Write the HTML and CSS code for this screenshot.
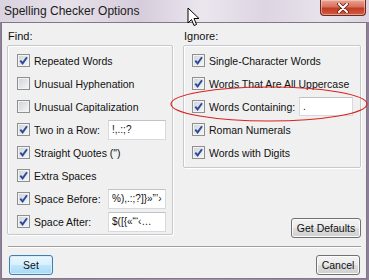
FILE: index.html
```html
<!DOCTYPE html>
<html lang="en">
<head>
    <meta charset="UTF-8">
    <meta name="viewport" content="width=device-width, initial-scale=1.0">
    <title>Spelling Checker Options</title>
    <link rel="stylesheet" href="styles.css">
</head>
<body>
    <div class="window">
        <div class="titlebar">
            <span class="title">Spelling Checker Options</span>
            <div class="close">
                <svg width="16" height="10" viewBox="0 0 16 10">
                    <path d="M4 1 L12 9 M12 1 L4 9" stroke="#5a1d14" stroke-width="3.6" stroke-linecap="round"/>
                    <path d="M4 1 L12 9 M12 1 L4 9" stroke="#fff" stroke-width="2" stroke-linecap="round"/>
                </svg>
            </div>
        </div>

        <div class="client">
            <div class="columns">
                <!-- find -->
                <div class="col col-find">
                    <div class="caption">Find:</div>
                    <div class="group">
                        <div class="row"><span class="cb on"></span><span>Repeated Words</span></div>
                        <div class="row"><span class="cb"></span><span>Unusual Hyphenation</span></div>
                        <div class="row"><span class="cb"></span><span>Unusual Capitalization</span></div>
                        <div class="row"><span class="cb on"></span><span>Two in a Row:</span><input class="field" type="text" value="!,.:;?"></div>
                        <div class="row"><span class="cb on"></span><span>Straight Quotes (")</span></div>
                        <div class="row"><span class="cb on"></span><span>Extra Spaces</span></div>
                        <div class="row"><span class="cb on"></span><span>Space Before:</span><input class="field" type="text" value="%),.:;?]}»”’›"></div>
                        <div class="row"><span class="cb on"></span><span>Space After:</span><input class="field" type="text" value="$([{«“‘‹…"></div>
                    </div>
                </div>

                <!-- ignore -->
                <div class="col col-ignore">
                    <div class="caption">Ignore:</div>
                    <div class="group">
                        <div class="row"><span class="cb on"></span><span>Single-Character Words</span></div>
                        <div class="row"><span class="cb on"></span><span>Words That Are All Uppercase</span></div>
                        <div class="row"><span class="cb on"></span><span>Words Containing:</span><input class="field small" type="text" value="."></div>
                        <div class="row"><span class="cb on"></span><span>Roman Numerals</span></div>
                        <div class="row"><span class="cb on"></span><span>Words with Digits</span></div>
                    </div>
                    <div class="defaults"><button class="btn wide">Get Defaults</button></div>
                </div>
            </div>

            <div class="sep"></div>

            <div class="footer">
                <button class="btn default">Set</button>
                <button class="btn">Cancel</button>
            </div>
        </div>

        <!-- annotation over the dialog -->
        <svg class="ring" width="369" height="280" viewBox="0 0 369 280">
            <ellipse cx="269" cy="104" rx="98" ry="17" fill="none" stroke="#d8231f" stroke-width="1.2"/>
        </svg>
        <svg class="cursor" width="14" height="20" viewBox="0 0 14 20">
            <path d="M1 1 L1 16 L4.5 12.5 L7 18.5 L9.5 17.5 L7 11.5 L12 11.5 Z" fill="#fff" stroke="#000" stroke-width="1" stroke-linejoin="round"/>
        </svg>
    </div>
</body>
</html>
```

FILE: styles.css
```css
* { margin: 0; padding: 0; box-sizing: border-box; }
body {
    width: 369px;
    height: 280px;
    overflow: hidden;
    font-family: "Liberation Sans", Arial, sans-serif;
    font-size: 10.5px;
    color: #111;
}
.window {
    position: relative;
    width: 369px;
    height: 280px;
    background: linear-gradient(90deg, #8f7f98, #a695ad 50%, #8e7f97);
}

/* glass title bar */
.titlebar {
    height: 22px;
    display: flex;
    align-items: flex-start;
    justify-content: space-between;
    background: linear-gradient(90deg, #dad3e0 0%, #e7e1ea 18%, #d6cddc 38%, #ebe6ee 55%, #ddd5e2 72%, #e8e3eb 88%, #dbd4e0 100%);
}
.title {
    padding: 4px 0 0 4px;
    font-size: 12px;
    color: #1b1b1b;
}
.close {
    width: 46px;
    height: 16px;
    margin-right: 3px;
    display: flex;
    align-items: center;
    justify-content: center;
    border: 1px solid #6b2a22;
    border-top: none;
    border-radius: 0 0 4px 4px;
    background: linear-gradient(#e9a595 0%, #d8705c 45%, #c23b25 55%, #d25c40 100%);
    box-shadow: inset 0 0 0 1px rgba(255, 220, 210, 0.5);
}

/* client area */
.client {
    width: 366px;
    height: 257px;
    margin-left: 1px;
    background: #f0f0f0;
    border: 1px solid #7f7886;
}
.columns {
    display: flex;
    gap: 10px;
    padding: 0 5px;
}
.col-find { width: 166px; }
.col-ignore { width: 178px; }
.caption {
    height: 22px;
    padding: 4px 0 0 1px;
    line-height: 18px;
    font-size: 11px;
}
.group {
    border: 1px solid #c5c9ce;
    border-radius: 2px;
    box-shadow: inset 1px 1px 0 #fff, 1px 1px 0 #fff;
    padding: 3px 0 1px 0;
}
.col-ignore .group { padding-bottom: 3px; }
.row {
    height: 23px;
    display: flex;
    align-items: center;
    padding: 0 6px 0 9px;
    white-space: nowrap;
}
.col-ignore .row { padding: 0 7px 0 8px; }

.cb {
    width: 13px;
    height: 13px;
    margin-right: 4px;
    flex: none;
    border: 1px solid #8e8f8f;
    background: linear-gradient(135deg, #cfd2d7, #f7f7f7);
    box-shadow: inset 0 0 0 1px #f3f3f3;
}
.cb.on {
    background:
        url("data:image/svg+xml,%3Csvg xmlns='http://www.w3.org/2000/svg' width='11' height='11'%3E%3Cpath d='M2.3 5.6 L4.6 8.4 L9 2.2' fill='none' stroke='%232a4a9a' stroke-width='1.9'/%3E%3C/svg%3E") center no-repeat,
        linear-gradient(135deg, #cfd2d7, #f7f7f7);
}

.field {
    margin-left: auto;
    width: 58px;
    height: 20px;
    padding: 0 0 0 3px;
    border: 1px solid #d6d9dd;
    border-top-color: #bfc3c8;
    background: #fff;
    font-family: "Liberation Sans", Arial, sans-serif;
    font-size: 10px;
    color: #111;
    outline: none;
}
.field.small {
    width: 54px;
    height: 19px;
}

.defaults {
    display: flex;
    justify-content: flex-end;
    margin-top: 50px;
}

.btn {
    height: 20px;
    width: 44px;
    border: 1px solid #707070;
    border-radius: 3px;
    background: linear-gradient(#f3f3f3 0%, #ebebeb 48%, #dddddd 52%, #cfcfcf 100%);
    box-shadow: inset 0 0 0 1px #fbfbfb;
    font-family: "Liberation Sans", Arial, sans-serif;
    font-size: 10.5px;
    color: #111;
}
.btn.wide { width: 70px; }
.btn.default {
    border-color: #3c7fb1;
    background: linear-gradient(#eaf6fd 0%, #d9f0fc 48%, #bee6fd 52%, #a7d9f5 100%);
    box-shadow: inset 0 0 0 1px #d6effc;
}

.sep {
    height: 2px;
    margin: 8px 5px 0 6px;
    border-top: 1px solid #a0a0a0;
    border-bottom: 1px solid #fff;
}
.footer {
    display: flex;
    justify-content: space-between;
    padding: 7px 6px 0 7px;
}

/* overlays */
.ring {
    position: absolute;
    left: 0;
    top: 0;
    pointer-events: none;
}
.cursor {
    position: absolute;
    left: 187px;
    top: 7px;
}
```
